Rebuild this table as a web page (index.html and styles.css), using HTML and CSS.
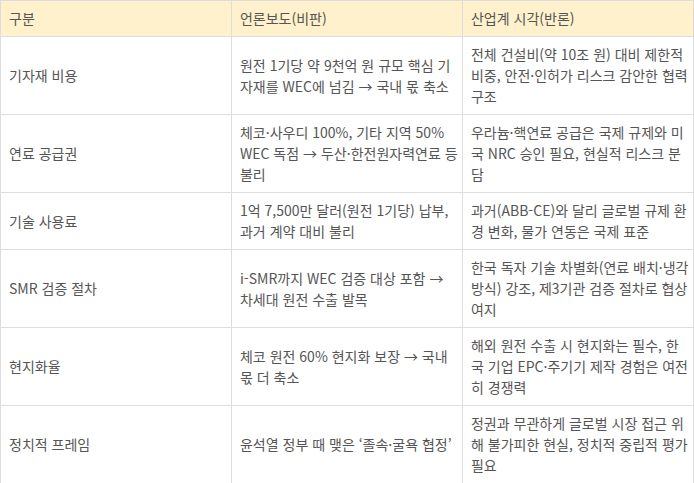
FILE: index.html
```html
<!DOCTYPE html>
<html lang="ko">
<head>
<meta charset="utf-8">
<link rel="stylesheet" href="styles.css">
</head>
<body>
<table class="compare">
  <colgroup><col class="c"><col class="c"><col class="c"></colgroup>
  <thead>
    <tr><th>구분</th><th>언론보도(비판)</th><th>산업계 시각(반론)</th></tr>
  </thead>
  <tbody>
    <tr><td>기자재 비용</td><td>원전 1기당 약 9천억 원 규모 핵심 기자재를 WEC에 넘김 → 국내 몫 축소</td><td>전체 건설비(약 10조 원) 대비 제한적 비중, 안전·인허가 리스크 감안한 협력 구조</td></tr>
    <tr><td>연료 공급권</td><td>체코·사우디 100%, 기타 지역 50% WEC 독점 → 두산·한전원자력연료 등 불리</td><td>우라늄·핵연료 공급은 국제 규제와 미국 NRC 승인 필요, 현실적 리스크 분담</td></tr>
    <tr><td>기술 사용료</td><td>1억 7,500만 달러(원전 1기당) 납부, 과거 계약 대비 불리</td><td>과거(ABB-CE)와 달리 글로벌 규제 환경 변화, 물가 연동은 국제 표준</td></tr>
    <tr><td>SMR 검증 절차</td><td>i-SMR까지 WEC 검증 대상 포함 → 차세대 원전 수출 발목</td><td>한국 독자 기술 차별화(연료 배치·냉각 방식) 강조, 제3기관 검증 절차로 협상 여지</td></tr>
    <tr><td>현지화율</td><td>체코 원전 60% 현지화 보장 → 국내 몫 더 축소</td><td>해외 원전 수출 시 현지화는 필수, 한국 기업 EPC·주기기 제작 경험은 여전히 경쟁력</td></tr>
    <tr><td>정치적 프레임</td><td>윤석열 정부 때 맺은 ‘졸속·굴욕 협정’</td><td>정권과 무관하게 글로벌 시장 접근 위해 불가피한 현실, 정치적 중립적 평가 필요</td></tr>
  </tbody>
</table>
</body>
</html>
```
FILE: styles.css
```css
html, body {
  margin: 0;
  padding: 0;
  background: #fff;
}
body {
  font-family: "Noto Sans CJK KR", "Noto Sans", sans-serif;
  font-size: 14px;
  line-height: 21px;
  color: #555;
}
.compare {
  width: 694px;
  border-collapse: collapse;
  table-layout: fixed;
}
.compare .c {
  width: 33.333%;
}
.compare th,
.compare td {
  border: 1px solid #ddd;
  padding: 7px 4px 7px 8px;
  text-align: left;
  vertical-align: middle;
  font-weight: 400;
}
.compare th {
  background: #fef1cb;
  color: #555;
}
```
